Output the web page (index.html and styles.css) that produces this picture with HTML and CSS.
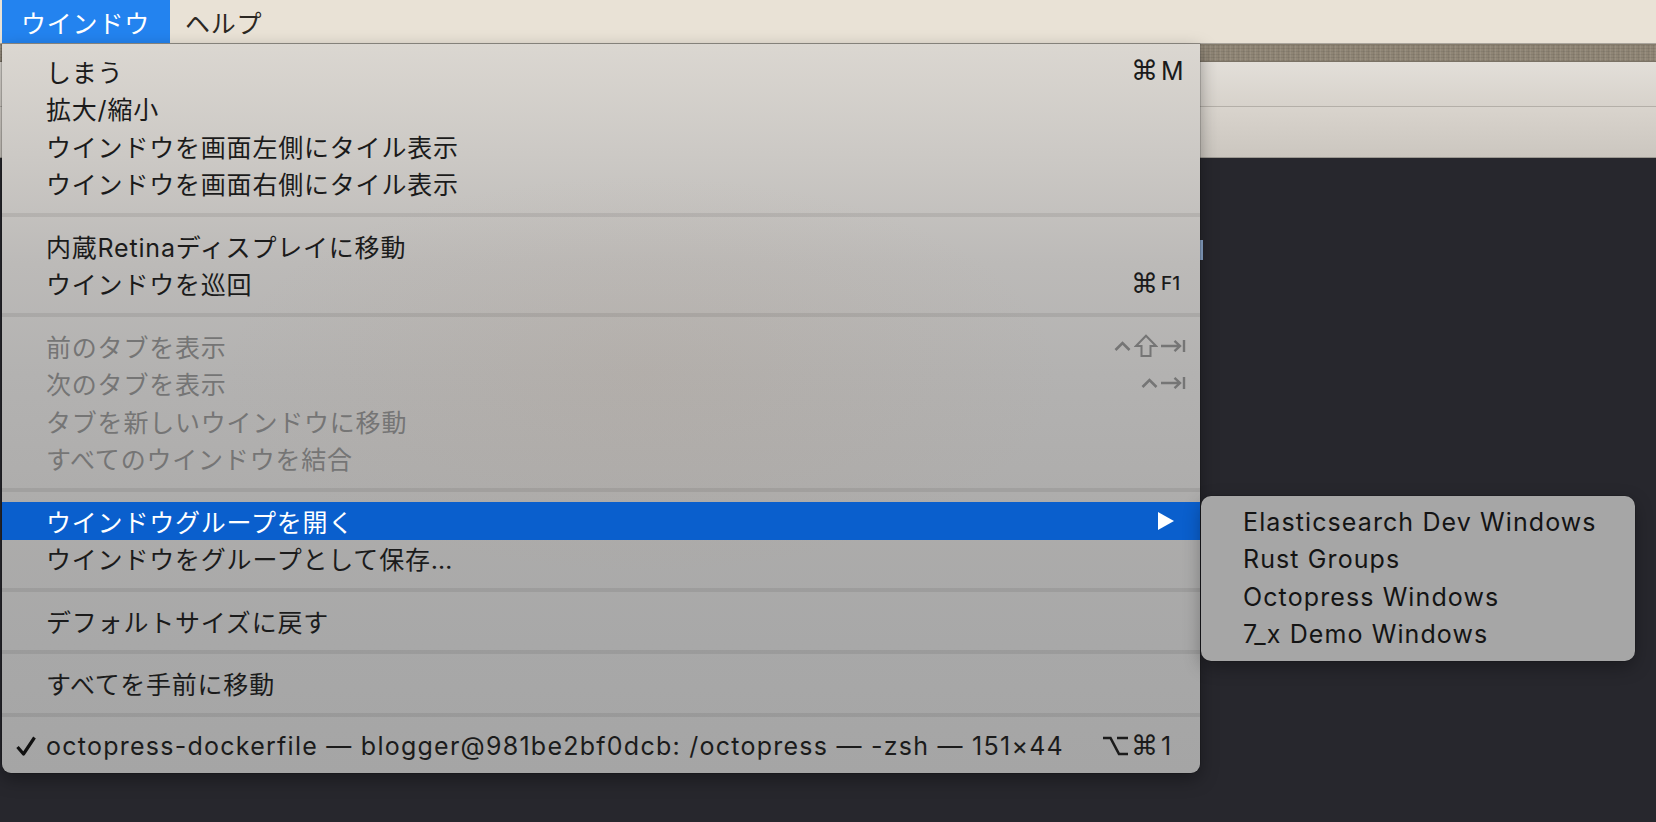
FILE: index.html
```html
<!DOCTYPE html>
<html lang="ja">
<head>
<meta charset="utf-8">
<title>ウインドウ</title>
<link rel="stylesheet" href="styles.css">
</head>
<body>
<header class="menubar">
  <span class="mb-item active">ウインドウ</span>
  <span class="mb-item">ヘルプ</span>
</header>
<main class="desktop">
  <div class="bgwin">
    <div class="grain"></div>
    <div class="tb tb1"></div>
    <div class="tb tb2"></div>
  </div>
</main>
<div class="caret-mark"></div>

<nav class="menu">
  <div class="item"><span class="check"></span><span class="label">しまう</span><span class="mods">⌘</span><span class="key">M</span></div>
  <div class="item"><span class="check"></span><span class="label">拡大/縮小</span></div>
  <div class="item"><span class="check"></span><span class="label">ウインドウを画面左側にタイル表示</span></div>
  <div class="item"><span class="check"></span><span class="label">ウインドウを画面右側にタイル表示</span></div>
  <div class="sep"></div>
  <div class="item"><span class="check"></span><span class="label">内蔵Retinaディスプレイに移動</span></div>
  <div class="item"><span class="check"></span><span class="label">ウインドウを巡回</span><span class="mods">⌘</span><span class="key small">F1</span></div>
  <div class="sep"></div>
  <div class="item disabled"><span class="check"></span><span class="label">前のタブを表示</span>
    <span class="mods">
      <svg class="ic" width="17" height="12" viewBox="0 0 17 12"><path d="M1.5 10 L8.5 3 L15.5 10" fill="none" stroke="currentColor" stroke-width="2.6"/></svg>
      <svg class="ic" width="24" height="24" viewBox="0 0 24 24"><path d="M12 1.8 L22 12 H16.5 V22 H7.5 V12 H2 Z" fill="none" stroke="currentColor" stroke-width="2" stroke-linejoin="miter"/></svg>
    </span>
    <span class="key"><svg class="ic" width="25" height="14" viewBox="0 0 25 14"><path d="M0 7 H19 M13.5 1.8 L19 7 L13.5 12.2 M23 1 V13" fill="none" stroke="currentColor" stroke-width="2.4"/></svg></span>
  </div>
  <div class="item disabled"><span class="check"></span><span class="label">次のタブを表示</span>
    <span class="mods">
      <svg class="ic" width="17" height="12" viewBox="0 0 17 12"><path d="M1.5 10 L8.5 3 L15.5 10" fill="none" stroke="currentColor" stroke-width="2.6"/></svg>
    </span>
    <span class="key"><svg class="ic" width="25" height="14" viewBox="0 0 25 14"><path d="M0 7 H19 M13.5 1.8 L19 7 L13.5 12.2 M23 1 V13" fill="none" stroke="currentColor" stroke-width="2.4"/></svg></span>
  </div>
  <div class="item disabled"><span class="check"></span><span class="label">タブを新しいウインドウに移動</span></div>
  <div class="item disabled"><span class="check"></span><span class="label">すべてのウインドウを結合</span></div>
  <div class="sep"></div>
  <div class="item selected"><span class="check"></span><span class="label">ウインドウグループを開く</span>
    <svg class="arrow" width="16" height="18" viewBox="0 0 16 18"><path d="M0 0 L16 9 L0 18 Z" fill="#fff"/></svg>
  </div>
  <div class="item"><span class="check"></span><span class="label">ウインドウをグループとして保存…</span></div>
  <div class="sep"></div>
  <div class="item"><span class="check"></span><span class="label">デフォルトサイズに戻す</span></div>
  <div class="sep"></div>
  <div class="item"><span class="check"></span><span class="label">すべてを手前に移動</span></div>
  <div class="sep"></div>
  <div class="item"><span class="check"><svg width="22" height="22" viewBox="0 0 22 22"><path d="M2.5 12 L8.5 19 L19.5 2.5" fill="none" stroke="#111" stroke-width="3.2" stroke-linejoin="round"/></svg></span><span class="label latin">octopress-dockerfile — blogger@981be2bf0dcb: /octopress — -zsh — 151×44</span>
    <span class="mods">
      <svg class="ic" width="25" height="20" viewBox="0 0 25 20"><path d="M0 2 H7.5 L16 18 H25 M14 2 H25" fill="none" stroke="currentColor" stroke-width="2.6"/></svg>⌘</span><span class="key">1</span>
  </div>
</nav>

<div class="submenu">
  <div class="sub-item">Elasticsearch Dev Windows</div>
  <div class="sub-item">Rust Groups</div>
  <div class="sub-item">Octopress Windows</div>
  <div class="sub-item">7_x Demo Windows</div>
</div>
</body>
</html>
```
FILE: styles.css
```css
* { box-sizing: border-box; }
html, body { margin: 0; padding: 0; }
body {
  width: 1656px;
  height: 822px;
  overflow: hidden;
  position: relative;
  background: #27272d;
  font-family: "Inter", "Noto Sans CJK JP", sans-serif;
  font-size: 25px;
  color: #1b1b1b;
}

.menubar {
  height: 44px;
  display: flex;
  align-items: stretch;
  background: #e9e2d6;
  border-bottom: 1px solid #aaa59d;
}
.mb-item {
  display: flex;
  align-items: center;
  padding: 0 20px 0 15px;
  color: #2c2823;
  letter-spacing: 0.8px;
}
.mb-item.active {
  margin-left: 2px;
  padding: 0 20px 0 19px;
  background: #2383ef;
  color: #fff;
}

.desktop { height: 778px; }
.bgwin { display: flex; flex-direction: column; }
.grain {
  height: 18px;
  background-color: #908676;
  background-image:
    repeating-linear-gradient(90deg, rgba(255,255,255,0.07) 0 1px, transparent 1px 3px, rgba(0,0,0,0.06) 3px 4px, transparent 4px 5px),
    repeating-linear-gradient(0deg, rgba(0,0,0,0.07) 0 1px, transparent 1px 3px);
  border-top: 1px solid #857c6d;
  border-bottom: 1px solid #7a7265;
}
.tb { border-bottom: 1px solid #b4afa8; }
.tb1 { height: 45px; background: linear-gradient(#e3dfd9, #d7d2cb); }
.tb2 { height: 51px; background: linear-gradient(#d9d4cd, #cbc6bf); border-bottom-color: #9d9992; }

.caret-mark {
  position: absolute;
  left: 1200px;
  top: 240px;
  width: 3px;
  height: 20px;
  background: #89a4c8;
}

.menu {
  position: absolute;
  left: 2px;
  top: 44px;
  width: 1198px;
  padding: 8px 12px 8px 0;
  border-radius: 0 0 9px 9px;
  background:
    radial-gradient(ellipse 420px 200px at 640px 330px, rgba(175,150,128,0.14), transparent),
    linear-gradient(to bottom, #dbd7d1 0px, #ccc9c5 110px, #bcbab8 220px, #b3b2b1 330px, #adacab 470px, #a8a8a8 600px, #a5a5a5 729px);
  box-shadow: 0 6px 18px rgba(0,0,0,0.35), 0 0 0 0.5px rgba(0,0,0,0.3);
}
.item {
  display: flex;
  align-items: center;
  height: 37.5px;
  letter-spacing: 0.8px;
  white-space: nowrap;
}
.label.latin { letter-spacing: 1.25px; }
.check {
  width: 44px;
  flex-shrink: 0;
  display: flex;
  align-items: center;
  padding-left: 13px;
}
.label { flex: 1; }
.mods {
  display: flex;
  align-items: center;
  justify-content: flex-end;
  gap: 3px;
  font-family: "DejaVu Sans", sans-serif;
  font-size: 27px;
  letter-spacing: 0;
}
.key {
  width: 27px;
  margin-left: 3px;
  display: flex;
  align-items: center;
  font-family: "Inter", sans-serif;
  letter-spacing: 0;
}
.key.small { font-size: 19px; font-weight: 500; }
.ic { display: block; }
.disabled { color: #757575; }
.selected { background: #0a5fcd; color: #fff; margin-right: -12px; padding-right: 26px; }
.arrow { display: block; }
.sep {
  height: 25px;
  display: flex;
  align-items: center;
  margin-right: -12px;
}
.sep::before {
  content: "";
  display: block;
  width: 100%;
  height: 4px;
  background: rgba(0,0,0,0.075);
}

.submenu {
  position: absolute;
  left: 1201px;
  top: 496px;
  width: 434px;
  padding: 7px 0 8px;
  border-radius: 10px;
  background: #a6a6a6;
  box-shadow: 0 6px 18px rgba(0,0,0,0.3), 0 0 0 0.5px rgba(0,0,0,0.25);
}
.sub-item {
  height: 37.5px;
  display: flex;
  align-items: center;
  padding-left: 42px;
  color: #141414;
  letter-spacing: 1.1px;
  white-space: nowrap;
}
```
